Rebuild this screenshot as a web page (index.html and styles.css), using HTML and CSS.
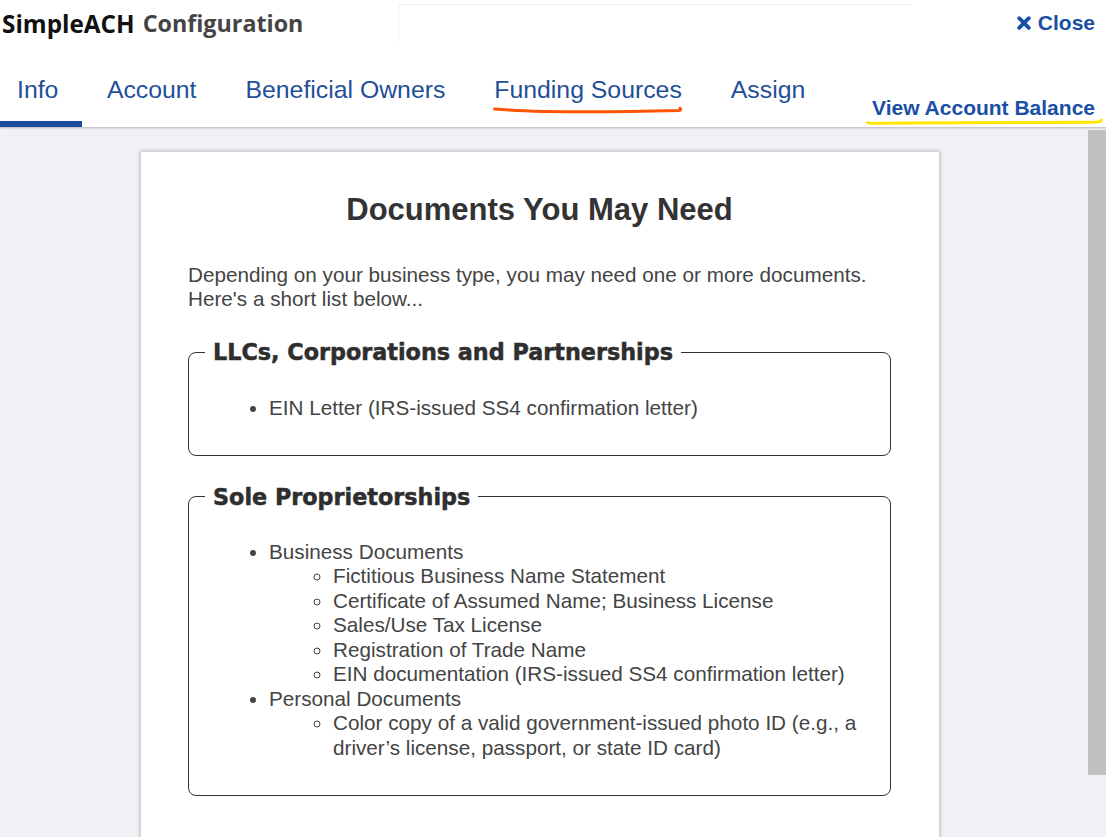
FILE: index.html
```html
<!DOCTYPE html>
<html lang="en">
<head>
<meta charset="utf-8">
<title>SimpleACH Configuration</title>
<link rel="stylesheet" href="styles.css">
</head>
<body>
<header class="topbar">
  <div class="row1">
    <h1 class="app-title"><span class="brand">SimpleACH</span><span class="brand-sub">Configuration</span></h1>
    <div class="ghost"></div>
    <a class="close" href="#"><svg class="close-icon" viewBox="0 0 14 14" width="14" height="14"><path d="M2.2 2.2 L11.8 11.8 M11.8 2.2 L2.2 11.8" stroke="#1a4fa6" stroke-width="3.8" stroke-linecap="round"/></svg>Close</a>
  </div>
  <div class="row2">
    <nav class="tabs">
      <a class="tab active" href="#">Info</a>
      <a class="tab" href="#">Account</a>
      <a class="tab" href="#">Beneficial Owners</a>
      <a class="tab marked" href="#">Funding Sources<svg class="scribble orange" viewBox="0 0 190 8" preserveAspectRatio="none"><path d="M1.5 3 C 40 6.2, 120 6.2, 186.5 4.5 C 188 4, 188 3, 187 2.3" fill="none" stroke="#ff5500" stroke-width="3" stroke-linecap="round"/></svg></a>
      <a class="tab" href="#">Assign</a>
    </nav>
    <a class="balance" href="#">View Account Balance<svg class="scribble yellow" viewBox="0 0 238 8" preserveAspectRatio="none"><path d="M1.5 4.5 C 3 6, 8 5.5, 20 5.2 C 90 4, 170 4.6, 228 4.3 C 233 4.2, 235.5 3.4, 235.5 2" fill="none" stroke="#ffe600" stroke-width="3" stroke-linecap="round"/></svg></a>
  </div>
</header>
<div class="main">
  <div class="canvas">
    <section class="card">
      <h2 class="card-title">Documents You May Need</h2>
      <p class="intro">Depending on your business type, you may need one or more documents.<br>Here's a short list below...</p>
      <fieldset class="group first">
        <legend>LLCs, Corporations and Partnerships</legend>
        <ul class="docs">
          <li>EIN Letter (IRS-issued SS4 confirmation letter)</li>
        </ul>
      </fieldset>
      <fieldset class="group second">
        <legend>Sole Proprietorships</legend>
        <ul class="docs">
          <li>Business Documents
            <ul class="sublist">
              <li>Fictitious Business Name Statement</li>
              <li>Certificate of Assumed Name; Business License</li>
              <li>Sales/Use Tax License</li>
              <li>Registration of Trade Name</li>
              <li>EIN documentation (IRS-issued SS4 confirmation letter)</li>
            </ul>
          </li>
          <li>Personal Documents
            <ul class="sublist">
              <li>Color copy of a valid government-issued photo ID (e.g., a driver’s license, passport, or state ID card)</li>
            </ul>
          </li>
        </ul>
      </fieldset>
    </section>
  </div>
  <div class="scrollbar"><div class="thumb"></div></div>
</div>
</body>
</html>
```

FILE: styles.css
```css
html, body {
  margin: 0;
  padding: 0;
}
body {
  width: 1106px;
  height: 837px;
  overflow: hidden;
  background: #f0f1f4;
  font-family: "Liberation Sans", Arial, sans-serif;
}
a { text-decoration: none; }

.topbar {
  background: #fff;
  height: 127px;
  box-shadow: 0 1px 2px rgba(0,0,0,0.25);
  position: relative;
  z-index: 2;
}
.row1 {
  display: grid;
  grid-template-columns: 398px 512px 1fr;
  height: 48px;
}
.app-title {
  display: flex;
  gap: 8px;
  margin: 0;
  padding-left: 2px;
  font-family: "Open Sans", "Noto Sans", sans-serif;
  font-weight: 700;
  font-size: 24.3px;
  line-height: 47px;
  white-space: nowrap;
}
.brand { color: #111; }
.brand-sub { color: #444; font-size: 23.3px; }
.ghost {
  margin-top: 4px;
  height: 36px;
  border-top: 1px solid #eeeeee;
  border-left: 1px solid #f2f2f2;
}
.close {
  justify-self: end;
  margin-right: 11px;
  margin-top: 10px;
  height: 26px;
  display: flex;
  align-items: center;
  gap: 7px;
  color: #1a4fa6;
  font-weight: 700;
  font-size: 21px;
}
.close-icon { display: block; }

.row2 {
  display: flex;
  justify-content: space-between;
  height: 79px;
}
.tabs {
  display: flex;
}
.tab {
  position: relative;
  box-sizing: border-box;
  height: 79px;
  padding: 27px 24.5px 0;
  line-height: 30px;
  font-size: 24.8px;
  color: #1f4f98;
  white-space: nowrap;
}
.tab:first-child { padding-left: 17px; padding-right: 24px; }
.tab.active { border-bottom: 6px solid #1a4b9c; }

.scribble {
  position: absolute;
  display: block;
  height: 8px;
}
.orange { left: 23px; bottom: 13px; width: 190px; }
.balance {
  position: relative;
  align-self: flex-start;
  margin-top: 46px;
  margin-right: 11px;
  line-height: 28px;
  font-weight: 700;
  font-size: 21px;
  color: #1a4fa6;
  white-space: nowrap;
}
.yellow { left: -6px; bottom: -4px; width: 238px; }

.main {
  display: flex;
  height: 710px;
}
.canvas {
  flex: 1;
  padding-top: 24px;
  overflow: hidden;
}
.scrollbar {
  width: 18px;
  background: #f0f1f4;
}
.thumb {
  margin-top: 3px;
  height: 645px;
  background: #c1c1c1;
}

.card {
  box-sizing: border-box;
  width: 800px;
  min-height: 720px;
  margin-left: 140px;
  padding: 40px 48px 0 47px;
  background: #fff;
  border: 1px solid #d4d4d4;
  box-shadow: 0 0 3px rgba(0,0,0,0.3);
}
.card-title {
  margin: 0;
  text-align: center;
  font-size: 31px;
  line-height: 36px;
  font-weight: 700;
  color: #333;
}
.intro {
  margin: 35px 0 0;
  font-size: 20.7px;
  line-height: 24px;
  color: #444;
}
.group {
  margin: 0;
  padding: 0 16px;
  border: 1px solid #333;
  border-radius: 8px;
}
.group.first { margin-top: 28px; }
.group.second { margin-top: 28px; }
.group legend {
  padding: 0 8px;
  margin: 0;
  font-family: "DejaVu Sans", Verdana, sans-serif;
  font-weight: 700;
  font-size: 22.3px;
  line-height: 26px;
  color: #2e2e2e;
  -webkit-text-stroke: 0.5px #2e2e2e;
}
.docs {
  margin: 31px 0 34px;
  padding-left: 64px;
  font-size: 20.7px;
  line-height: 24.5px;
  color: #444;
}
.second .docs { margin-top: 30px; margin-bottom: 35px; }
.sublist {
  margin: 0;
  padding-left: 64px;
  list-style: circle;
}
```
